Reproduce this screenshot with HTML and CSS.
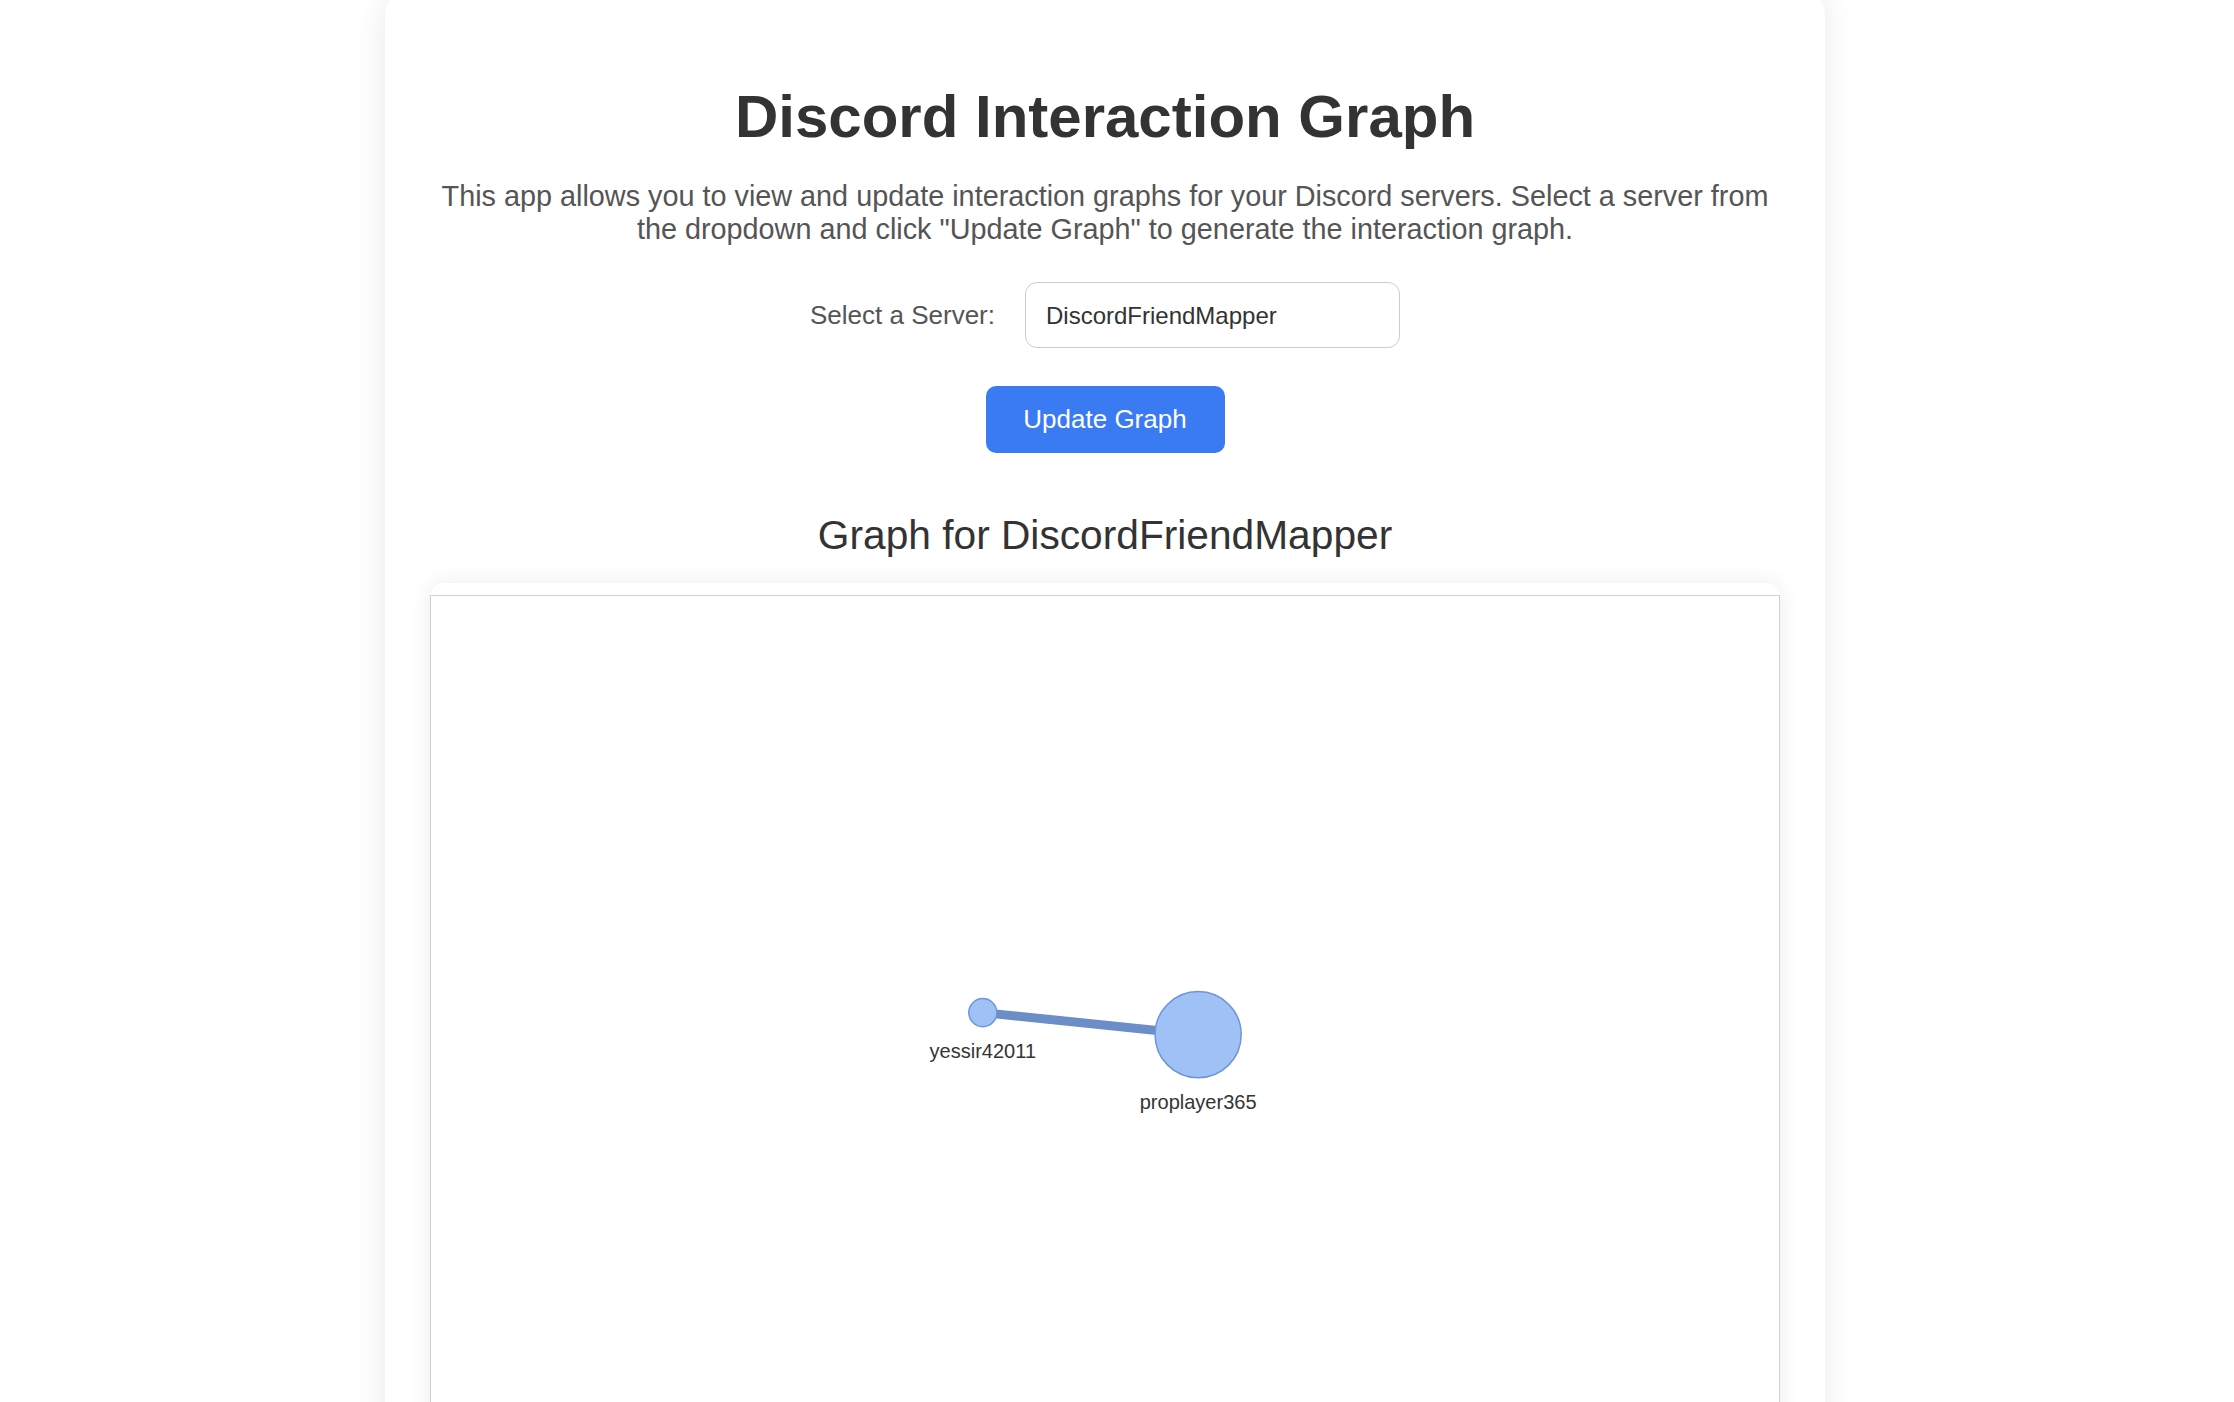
FILE: index.html
```html
<!DOCTYPE html>
<html lang="en">
<head>
<meta charset="utf-8">
<title>Discord Interaction Graph</title>
<link rel="stylesheet" href="styles.css">
</head>
<body>
<div class="card">
  <h1 class="title">Discord Interaction Graph</h1>
  <p class="intro">This app allows you to view and update interaction graphs for your Discord servers. Select a server from the dropdown and click "Update Graph" to generate the interaction graph.</p>
  <div class="server-row">
    <label class="server-label" for="server">Select a Server:</label>
    <select class="server-select" id="server">
      <option>DiscordFriendMapper</option>
    </select>
  </div>
  <div class="actions">
    <button class="update-btn" type="button">Update Graph</button>
  </div>
  <h2 class="graph-title">Graph for DiscordFriendMapper</h2>
  <div class="graph-wrap">
    <div class="graph-box">
      <svg class="graph-svg" viewBox="0 0 1346 1076" preserveAspectRatio="xMinYMin meet">
        <line x1="551" y1="416" x2="766" y2="438" stroke="#6b8dc8" stroke-width="9"/>
        <circle cx="551" cy="416" r="14" fill="#a0c1f6" stroke="#6f95d8" stroke-width="1.5"/>
        <circle cx="766" cy="438" r="43" fill="#a0c1f6" stroke="#6f95d8" stroke-width="1.5"/>
        <text x="551" y="461" class="node-label" text-anchor="middle">yessir42011</text>
        <text x="766" y="512" class="node-label" text-anchor="middle">proplayer365</text>
      </svg>
    </div>
  </div>
</div>
</body>
</html>
```
FILE: styles.css
```css
html, body {
  margin: 0;
  padding: 0;
  background: #ffffff;
}

body {
  font-family: "Liberation Sans", Arial, Helvetica, sans-serif;
  color: #333333;
  padding-right: 24px;
}

.card {
  box-sizing: border-box;
  width: 1440px;
  margin: -8px auto 0;
  padding: 90px 45px 40px;
  background: #ffffff;
  border-radius: 22px;
  box-shadow: 0 0 30px rgba(0, 0, 0, 0.09);
}

.title {
  margin: 0 0 29px;
  text-align: center;
  font-size: 60px;
  font-weight: bold;
  line-height: 69px;
  color: #333333;
}

.intro {
  margin: 0;
  text-align: center;
  font-size: 28.8px;
  line-height: 33px;
  color: #555555;
}

.server-row {
  display: flex;
  justify-content: center;
  align-items: center;
  gap: 30px;
  margin-top: 36px;
}

.server-label {
  font-size: 26px;
  color: #555555;
}

.server-select {
  -webkit-appearance: none;
  appearance: none;
  box-sizing: border-box;
  width: 375px;
  height: 66px;
  padding: 0 20px;
  font-family: "Liberation Sans", Arial, Helvetica, sans-serif;
  font-size: 24px;
  color: #333333;
  background: #ffffff;
  border: 1.5px solid #cccccc;
  border-radius: 12px;
}

.actions {
  display: flex;
  justify-content: center;
  margin-top: 38px;
}

.update-btn {
  box-sizing: border-box;
  width: 239px;
  height: 67px;
  padding: 0;
  font-family: "Liberation Sans", Arial, Helvetica, sans-serif;
  font-size: 26px;
  color: #ffffff;
  background: #3a7bf4;
  border: none;
  border-radius: 10px;
}

.graph-title {
  margin: 59px 0 24px;
  text-align: center;
  font-size: 40.7px;
  font-weight: normal;
  line-height: 47px;
  color: #333333;
}

.graph-wrap {
  padding-top: 12px;
  border-radius: 14px;
  background: #ffffff;
  box-shadow: 0 0 22px rgba(0, 0, 0, 0.08);
}

.graph-box {
  box-sizing: border-box;
  height: 1080px;
  border: 1.5px solid #d0d0d0;
  background: #ffffff;
}

.graph-svg {
  display: block;
  width: 100%;
  height: 100%;
}

.node-label {
  font-family: "Liberation Sans", Arial, Helvetica, sans-serif;
  font-size: 20px;
  fill: #343434;
}
```
